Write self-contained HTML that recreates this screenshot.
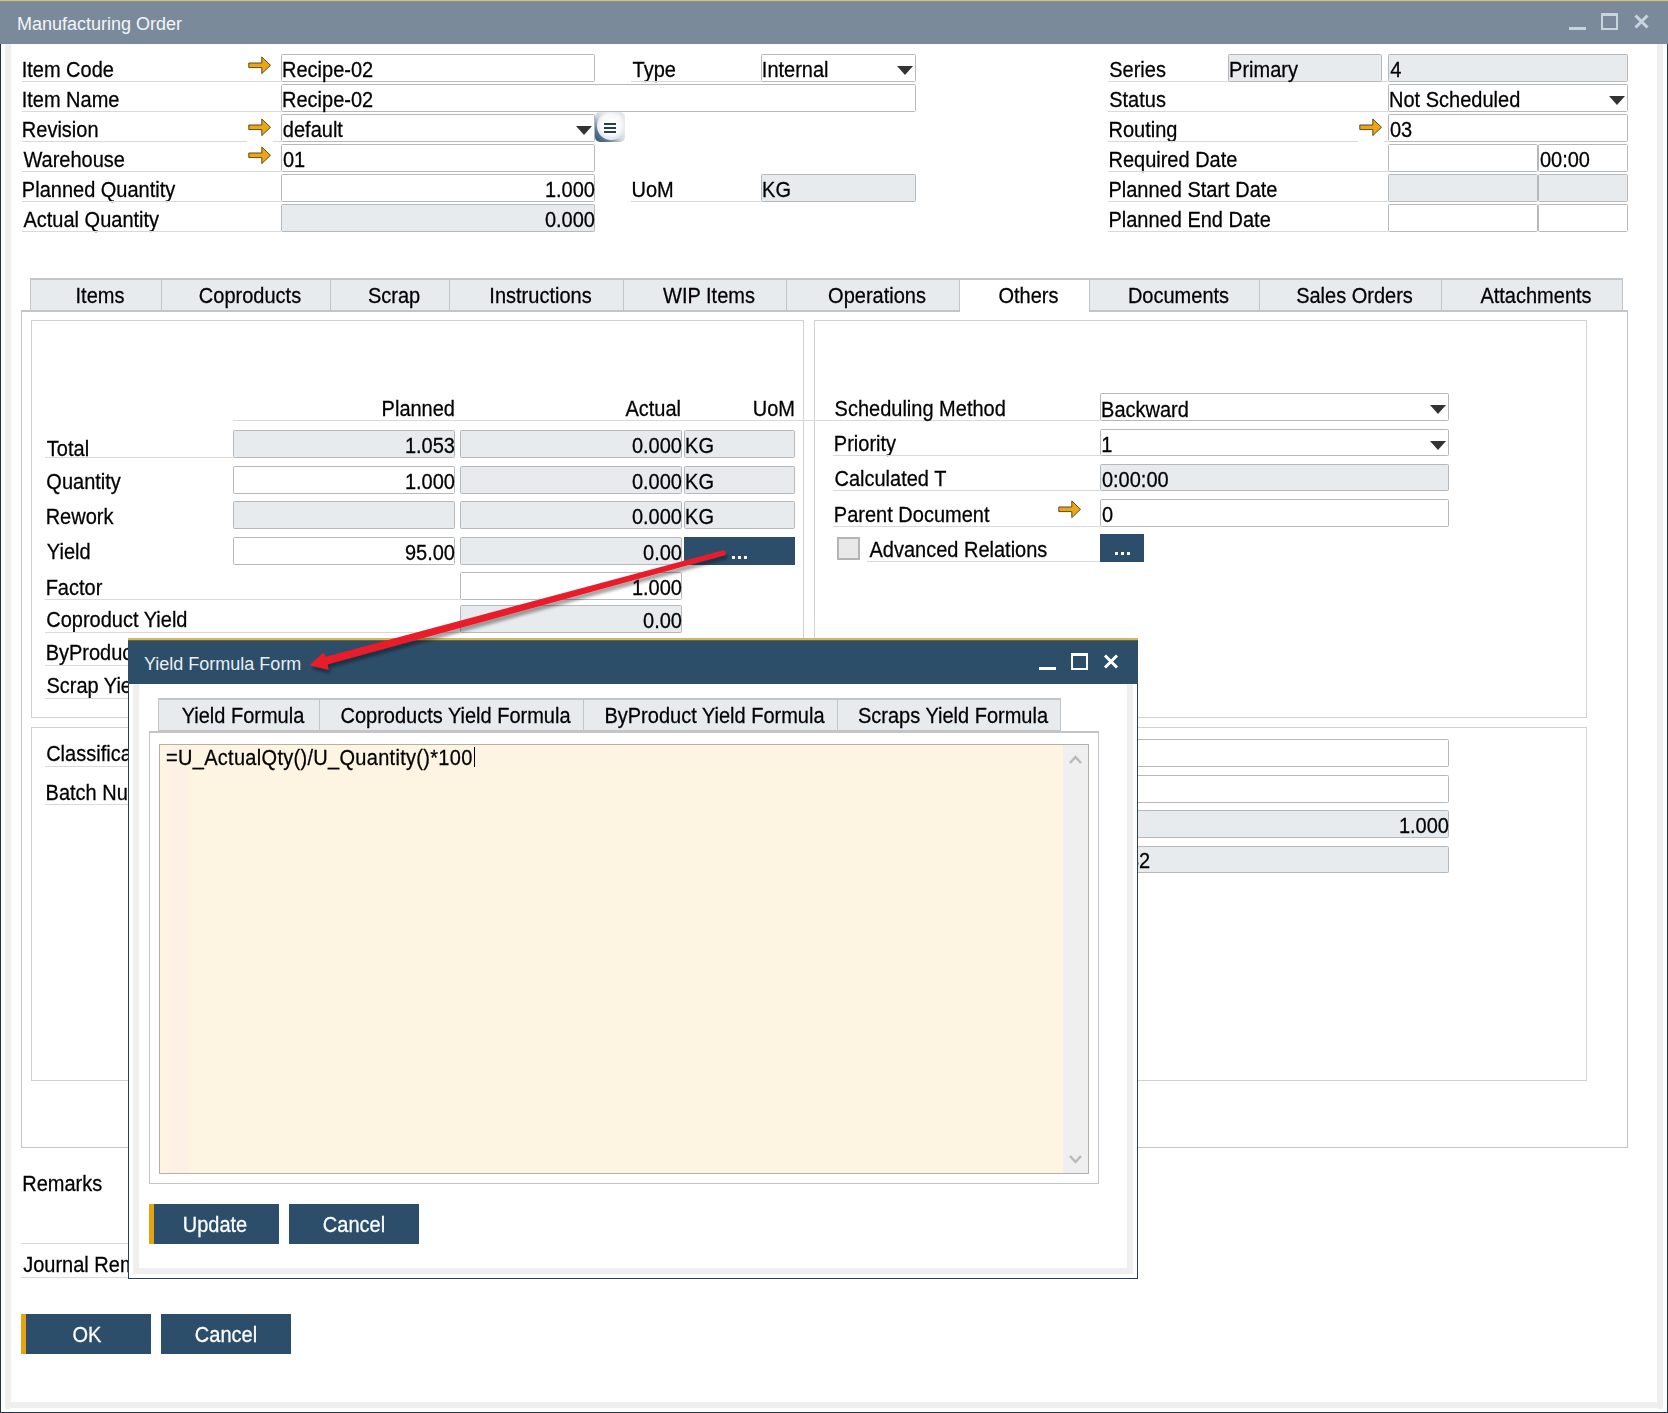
<!DOCTYPE html>
<html><head><meta charset="utf-8"><title>Manufacturing Order</title>
<style>
html,body{margin:0;padding:0;}
body{width:1668px;height:1413px;position:relative;overflow:hidden;background:#fff;font-family:'Liberation Sans',sans-serif;}
body>div{position:absolute;}
.t{white-space:pre;font-family:'Liberation Sans',sans-serif;-webkit-text-stroke:0.25px currentColor;transform:scaleY(1.08);transform-origin:0 17px;}
</style></head><body>
<div style="left:0px;top:0px;width:1668px;height:1px;background:#c9c199"></div>
<div style="left:0px;top:1px;width:1668px;height:1px;background:#929078"></div>
<div style="left:0px;top:2px;width:1668px;height:42px;background:#7b8a9a"></div>
<div class="t" style="left:17px;top:15px;font-size:18px;line-height:18px;color:#f2f5f8;-webkit-text-stroke:0;transform:none">Manufacturing Order</div>
<div style="left:1569px;top:27px;width:17px;height:3px;background:#c9d5de"></div>
<div style="left:1601px;top:13px;width:17px;height:17px;border:2px solid #c9d5de;border-top-width:3px;box-sizing:border-box"></div>
<svg style="position:absolute;left:1634px;top:14px" width="15" height="15" viewBox="0 0 15 15"><path d="M1.5 1.5 L13.5 13.5 M13.5 1.5 L1.5 13.5" stroke="#c9d5de" stroke-width="3"/></svg>
<div style="left:0px;top:44px;width:1px;height:1369px;background:#1f364c"></div>
<div style="left:1667px;top:44px;width:1px;height:1369px;background:#1f364c"></div>
<div style="left:0px;top:1412px;width:1668px;height:1px;background:#1f364c"></div>
<div style="left:5px;top:44px;width:6px;height:1365px;background:#efefef"></div>
<div style="left:1657px;top:44px;width:6px;height:1365px;background:#efefef"></div>
<div style="left:5px;top:1402px;width:1658px;height:6px;background:#efefef"></div>
<div class="t" style="left:21.65px;top:60px;font-size:20px;line-height:20px;color:#000;">Item Code</div>
<div style="left:22px;top:81px;width:259px;height:1px;background:#d9d9d9"></div>
<div class="t" style="left:21.65px;top:90px;font-size:20px;line-height:20px;color:#000;">Item Name</div>
<div style="left:22px;top:111px;width:259px;height:1px;background:#d9d9d9"></div>
<div class="t" style="left:21.86px;top:120px;font-size:20px;line-height:20px;color:#000;">Revision</div>
<div style="left:22px;top:141px;width:259px;height:1px;background:#d9d9d9"></div>
<div class="t" style="left:23.41px;top:150px;font-size:20px;line-height:20px;color:#000;">Warehouse</div>
<div style="left:22px;top:171px;width:259px;height:1px;background:#d9d9d9"></div>
<div class="t" style="left:21.86px;top:180px;font-size:20px;line-height:20px;color:#000;">Planned Quantity</div>
<div style="left:22px;top:201px;width:259px;height:1px;background:#d9d9d9"></div>
<div class="t" style="left:23.46px;top:210px;font-size:20px;line-height:20px;color:#000;">Actual Quantity</div>
<div style="left:22px;top:231px;width:259px;height:1px;background:#d9d9d9"></div>
<div style="left:281px;top:54px;width:314px;height:28px;border:1px solid #b6b9bc;border-radius:1.5px;box-sizing:border-box;background:#fff"></div>
<div class="t" style="left:282.06px;top:60px;font-size:20px;line-height:20px;color:#000;">Recipe-02</div>
<div style="left:281px;top:84px;width:635px;height:28px;border:1px solid #b6b9bc;border-radius:1.5px;box-sizing:border-box;background:#fff"></div>
<div class="t" style="left:282.06px;top:90px;font-size:20px;line-height:20px;color:#000;">Recipe-02</div>
<div style="left:281px;top:114px;width:314px;height:28px;border:1px solid #b6b9bc;border-radius:1.5px;box-sizing:border-box;background:#fff"></div>
<div class="t" style="left:282.86px;top:120px;font-size:20px;line-height:20px;color:#000;">default</div>
<div style="left:576px;top:126px;width:0;height:0;border-left:8.0px solid transparent;border-right:8.0px solid transparent;border-top:9px solid #333"></div>
<div style="left:281px;top:144px;width:314px;height:28px;border:1px solid #b6b9bc;border-radius:1.5px;box-sizing:border-box;background:#fff"></div>
<div class="t" style="left:282.92px;top:150px;font-size:20px;line-height:20px;color:#000;">01</div>
<div style="left:281px;top:174px;width:314px;height:28px;border:1px solid #b6b9bc;border-radius:1.5px;box-sizing:border-box;background:#fff"></div>
<div class="t" style="right:1073px;top:180px;font-size:20px;line-height:20px;color:#000;text-align:right;">1.000</div>
<div style="left:281px;top:204px;width:314px;height:28px;border:1px solid #b6b9bc;border-radius:1.5px;box-sizing:border-box;background:#e8ebee"></div>
<div class="t" style="right:1073px;top:210px;font-size:20px;line-height:20px;color:#000;text-align:right;">0.000</div>
<svg style="position:absolute;left:248px;top:56px" width="24" height="19" viewBox="0 0 24 19"><path d="M0.8 7 H13.8 V1 L22.5 9.3 L13.8 17.6 V11.6 H0.8 Z" fill="#eba614" stroke="#5a4a20" stroke-width="1" stroke-linejoin="miter"/></svg>
<svg style="position:absolute;left:248px;top:118px" width="24" height="19" viewBox="0 0 24 19"><path d="M0.8 7 H13.8 V1 L22.5 9.3 L13.8 17.6 V11.6 H0.8 Z" fill="#eba614" stroke="#5a4a20" stroke-width="1" stroke-linejoin="miter"/></svg>
<svg style="position:absolute;left:248px;top:146px" width="24" height="19" viewBox="0 0 24 19"><path d="M0.8 7 H13.8 V1 L22.5 9.3 L13.8 17.6 V11.6 H0.8 Z" fill="#eba614" stroke="#5a4a20" stroke-width="1" stroke-linejoin="miter"/></svg>
<div style="left:247px;top:141px;width:26px;height:1px;background:#fff"></div>
<div style="left:595px;top:112px;width:30px;height:30px;border-radius:5px;background:linear-gradient(45deg,#2f5273 0%,#5b7794 22%,#c9d3dd 45%,#eef1f4 70%,#dfe5ea 100%)"></div>
<div style="left:597px;top:112px;width:28px;height:28px;border-radius:50%;background:radial-gradient(circle at 50% 45%,#ffffff 0%,#f6f8fa 50%,#d9e0e7 80%,#b9c6d2 100%)"></div>
<div style="left:604px;top:123px;width:12px;height:2px;background:#2a3d52"></div>
<div style="left:604px;top:127px;width:12px;height:2px;background:#2a3d52"></div>
<div style="left:604px;top:131px;width:12px;height:2px;background:#2a3d52"></div>
<div class="t" style="left:632.55px;top:60px;font-size:20px;line-height:20px;color:#000;">Type</div>
<div style="left:631px;top:81px;width:130px;height:1px;background:#d9d9d9"></div>
<div style="left:761px;top:54px;width:155px;height:28px;border:1px solid #b6b9bc;border-radius:1.5px;box-sizing:border-box;background:#fff"></div>
<div class="t" style="left:761.85px;top:60px;font-size:20px;line-height:20px;color:#000;">Internal</div>
<div style="left:897px;top:66px;width:0;height:0;border-left:8.0px solid transparent;border-right:8.0px solid transparent;border-top:9px solid #333"></div>
<div class="t" style="left:631.46px;top:180px;font-size:20px;line-height:20px;color:#000;">UoM</div>
<div style="left:631px;top:201px;width:130px;height:1px;background:#d9d9d9"></div>
<div style="left:761px;top:174px;width:155px;height:28px;border:1px solid #b6b9bc;border-radius:1.5px;box-sizing:border-box;background:#e8ebee"></div>
<div class="t" style="left:762.06px;top:180px;font-size:20px;line-height:20px;color:#000;">KG</div>
<div class="t" style="left:1109.19px;top:60px;font-size:20px;line-height:20px;color:#000;">Series</div>
<div style="left:1108px;top:81px;width:280px;height:1px;background:#d9d9d9"></div>
<div class="t" style="left:1109.19px;top:90px;font-size:20px;line-height:20px;color:#000;">Status</div>
<div style="left:1108px;top:111px;width:280px;height:1px;background:#d9d9d9"></div>
<div class="t" style="left:1108.46px;top:120px;font-size:20px;line-height:20px;color:#000;">Routing</div>
<div style="left:1108px;top:141px;width:280px;height:1px;background:#d9d9d9"></div>
<div class="t" style="left:1108.46px;top:150px;font-size:20px;line-height:20px;color:#000;">Required Date</div>
<div style="left:1108px;top:171px;width:280px;height:1px;background:#d9d9d9"></div>
<div class="t" style="left:1108.46px;top:180px;font-size:20px;line-height:20px;color:#000;">Planned Start Date</div>
<div style="left:1108px;top:201px;width:280px;height:1px;background:#d9d9d9"></div>
<div class="t" style="left:1108.46px;top:210px;font-size:20px;line-height:20px;color:#000;">Planned End Date</div>
<div style="left:1108px;top:231px;width:280px;height:1px;background:#d9d9d9"></div>
<div style="left:1228px;top:54px;width:154px;height:28px;border:1px solid #b6b9bc;border-radius:1.5px;box-sizing:border-box;background:#e8ebee"></div>
<div class="t" style="left:1229.06px;top:60px;font-size:20px;line-height:20px;color:#000;">Primary</div>
<div style="left:1388px;top:54px;width:240px;height:28px;border:1px solid #b6b9bc;border-radius:1.5px;box-sizing:border-box;background:#e8ebee"></div>
<div class="t" style="left:1390.24px;top:60px;font-size:20px;line-height:20px;color:#000;">4</div>
<div style="left:1388px;top:84px;width:240px;height:28px;border:1px solid #b6b9bc;border-radius:1.5px;box-sizing:border-box;background:#fff"></div>
<div class="t" style="left:1389.06px;top:90px;font-size:20px;line-height:20px;color:#000;">Not Scheduled</div>
<div style="left:1609px;top:96px;width:0;height:0;border-left:8.0px solid transparent;border-right:8.0px solid transparent;border-top:9px solid #333"></div>
<div style="left:1388px;top:114px;width:240px;height:28px;border:1px solid #b6b9bc;border-radius:1.5px;box-sizing:border-box;background:#fff"></div>
<div class="t" style="left:1389.92px;top:120px;font-size:20px;line-height:20px;color:#000;">03</div>
<svg style="position:absolute;left:1359px;top:118px" width="24" height="19" viewBox="0 0 24 19"><path d="M0.8 7 H13.8 V1 L22.5 9.3 L13.8 17.6 V11.6 H0.8 Z" fill="#eba614" stroke="#5a4a20" stroke-width="1" stroke-linejoin="miter"/></svg>
<div style="left:1358px;top:141px;width:26px;height:1px;background:#fff"></div>
<div style="left:1388px;top:144px;width:150px;height:28px;border:1px solid #b6b9bc;border-radius:1.5px;box-sizing:border-box;background:#fff"></div>
<div style="left:1538px;top:144px;width:90px;height:28px;border:1px solid #b6b9bc;border-radius:1.5px;box-sizing:border-box;background:#fff"></div>
<div class="t" style="left:1539.92px;top:150px;font-size:20px;line-height:20px;color:#000;">00:00</div>
<div style="left:1388px;top:174px;width:150px;height:28px;border:1px solid #b6b9bc;border-radius:1.5px;box-sizing:border-box;background:#e8ebee"></div>
<div style="left:1538px;top:174px;width:90px;height:28px;border:1px solid #b6b9bc;border-radius:1.5px;box-sizing:border-box;background:#e8ebee"></div>
<div style="left:1388px;top:204px;width:150px;height:28px;border:1px solid #b6b9bc;border-radius:1.5px;box-sizing:border-box;background:#fff"></div>
<div style="left:1538px;top:204px;width:90px;height:28px;border:1px solid #b6b9bc;border-radius:1.5px;box-sizing:border-box;background:#fff"></div>
<div style="left:21px;top:310px;width:1607px;height:838px;border:1px solid #c2c4c6;border-top:2px solid #c2c4c6;box-sizing:border-box;background:#fff"></div>
<div style="left:30px;top:278px;width:132px;height:32px;background:#e8ebee;border:1px solid #c2c4c6;border-top:2px solid #c2c4c6;border-bottom:0;box-sizing:border-box"></div>
<div class="t" style="left:-200.0px;width:600px;top:286px;font-size:20px;line-height:20px;color:#000;text-align:center;">Items</div>
<div style="left:161px;top:278px;width:170px;height:32px;background:#e8ebee;border:1px solid #c2c4c6;border-top:2px solid #c2c4c6;border-bottom:0;box-sizing:border-box"></div>
<div class="t" style="left:-50.0px;width:600px;top:286px;font-size:20px;line-height:20px;color:#000;text-align:center;">Coproducts</div>
<div style="left:330px;top:278px;width:120px;height:32px;background:#e8ebee;border:1px solid #c2c4c6;border-top:2px solid #c2c4c6;border-bottom:0;box-sizing:border-box"></div>
<div class="t" style="left:94.0px;width:600px;top:286px;font-size:20px;line-height:20px;color:#000;text-align:center;">Scrap</div>
<div style="left:449px;top:278px;width:175px;height:32px;background:#e8ebee;border:1px solid #c2c4c6;border-top:2px solid #c2c4c6;border-bottom:0;box-sizing:border-box"></div>
<div class="t" style="left:240.5px;width:600px;top:286px;font-size:20px;line-height:20px;color:#000;text-align:center;">Instructions</div>
<div style="left:623px;top:278px;width:164px;height:32px;background:#e8ebee;border:1px solid #c2c4c6;border-top:2px solid #c2c4c6;border-bottom:0;box-sizing:border-box"></div>
<div class="t" style="left:409.0px;width:600px;top:286px;font-size:20px;line-height:20px;color:#000;text-align:center;">WIP Items</div>
<div style="left:786px;top:278px;width:174px;height:32px;background:#e8ebee;border:1px solid #c2c4c6;border-top:2px solid #c2c4c6;border-bottom:0;box-sizing:border-box"></div>
<div class="t" style="left:577.0px;width:600px;top:286px;font-size:20px;line-height:20px;color:#000;text-align:center;">Operations</div>
<div style="left:959px;top:278px;width:131px;height:34px;background:#fff;border:1px solid #c2c4c6;border-top:2px solid #c2c4c6;border-bottom:none;box-sizing:border-box"></div>
<div class="t" style="left:728.5px;width:600px;top:286px;font-size:20px;line-height:20px;color:#000;text-align:center;">Others</div>
<div style="left:1089px;top:278px;width:171px;height:32px;background:#e8ebee;border:1px solid #c2c4c6;border-top:2px solid #c2c4c6;border-bottom:0;box-sizing:border-box"></div>
<div class="t" style="left:878.5px;width:600px;top:286px;font-size:20px;line-height:20px;color:#000;text-align:center;">Documents</div>
<div style="left:1259px;top:278px;width:183px;height:32px;background:#e8ebee;border:1px solid #c2c4c6;border-top:2px solid #c2c4c6;border-bottom:0;box-sizing:border-box"></div>
<div class="t" style="left:1054.5px;width:600px;top:286px;font-size:20px;line-height:20px;color:#000;text-align:center;">Sales Orders</div>
<div style="left:1441px;top:278px;width:182px;height:32px;background:#e8ebee;border:1px solid #c2c4c6;border-top:2px solid #c2c4c6;border-bottom:0;box-sizing:border-box"></div>
<div class="t" style="left:1236.0px;width:600px;top:286px;font-size:20px;line-height:20px;color:#000;text-align:center;">Attachments</div>
<div style="left:31px;top:320px;width:773px;height:398px;border:1px solid #d2d2d2;box-sizing:border-box;background:transparent"></div>
<div style="left:814px;top:320px;width:773px;height:398px;border:1px solid #d2d2d2;box-sizing:border-box;background:transparent"></div>
<div style="left:31px;top:727px;width:773px;height:354px;border:1px solid #d2d2d2;box-sizing:border-box;background:transparent"></div>
<div style="left:814px;top:727px;width:773px;height:354px;border:1px solid #d2d2d2;box-sizing:border-box;background:transparent"></div>
<div class="t" style="right:1213px;top:399px;font-size:20px;line-height:20px;color:#000;text-align:right;">Planned</div>
<div class="t" style="right:987px;top:399px;font-size:20px;line-height:20px;color:#000;text-align:right;">Actual</div>
<div class="t" style="right:873px;top:399px;font-size:20px;line-height:20px;color:#000;text-align:right;">UoM</div>
<div style="left:233px;top:420px;width:867px;height:1px;background:#d9d9d9"></div>
<div class="t" style="left:46.85px;top:439px;font-size:20px;line-height:20px;color:#000;">Total</div>
<div class="t" style="left:46.35px;top:472px;font-size:20px;line-height:20px;color:#000;">Quantity</div>
<div class="t" style="left:45.66px;top:507px;font-size:20px;line-height:20px;color:#000;">Rework</div>
<div class="t" style="left:46.86px;top:542px;font-size:20px;line-height:20px;color:#000;">Yield</div>
<div class="t" style="left:45.66px;top:578px;font-size:20px;line-height:20px;color:#000;">Factor</div>
<div class="t" style="left:46.28px;top:610px;font-size:20px;line-height:20px;color:#000;">Coproduct Yield</div>
<div class="t" style="left:45.66px;top:643px;font-size:20px;line-height:20px;color:#000;">ByProduct Yield</div>
<div class="t" style="left:46.39px;top:676px;font-size:20px;line-height:20px;color:#000;">Scrap Yield</div>
<div style="left:45px;top:457px;width:188px;height:1px;background:#d9d9d9"></div>
<div style="left:45px;top:599px;width:415px;height:1px;background:#d9d9d9"></div>
<div style="left:45px;top:632px;width:415px;height:1px;background:#d9d9d9"></div>
<div style="left:45px;top:665px;width:415px;height:1px;background:#d9d9d9"></div>
<div style="left:45px;top:698px;width:415px;height:1px;background:#d9d9d9"></div>
<div style="left:233px;top:430px;width:222px;height:28px;border:1px solid #b6b9bc;border-radius:1.5px;box-sizing:border-box;background:#e8ebee"></div>
<div class="t" style="right:1213px;top:436px;font-size:20px;line-height:20px;color:#000;text-align:right;">1.053</div>
<div style="left:460px;top:430px;width:222px;height:28px;border:1px solid #b6b9bc;border-radius:1.5px;box-sizing:border-box;background:#e8ebee"></div>
<div class="t" style="right:986px;top:436px;font-size:20px;line-height:20px;color:#000;text-align:right;">0.000</div>
<div style="left:684px;top:430px;width:111px;height:28px;border:1px solid #b6b9bc;border-radius:1.5px;box-sizing:border-box;background:#e8ebee"></div>
<div class="t" style="left:685.06px;top:436px;font-size:20px;line-height:20px;color:#000;">KG</div>
<div style="left:233px;top:466px;width:222px;height:28px;border:1px solid #b6b9bc;border-radius:1.5px;box-sizing:border-box;background:#fff"></div>
<div class="t" style="right:1213px;top:472px;font-size:20px;line-height:20px;color:#000;text-align:right;">1.000</div>
<div style="left:460px;top:466px;width:222px;height:28px;border:1px solid #b6b9bc;border-radius:1.5px;box-sizing:border-box;background:#e8ebee"></div>
<div class="t" style="right:986px;top:472px;font-size:20px;line-height:20px;color:#000;text-align:right;">0.000</div>
<div style="left:684px;top:466px;width:111px;height:28px;border:1px solid #b6b9bc;border-radius:1.5px;box-sizing:border-box;background:#e8ebee"></div>
<div class="t" style="left:685.06px;top:472px;font-size:20px;line-height:20px;color:#000;">KG</div>
<div style="left:233px;top:501px;width:222px;height:28px;border:1px solid #b6b9bc;border-radius:1.5px;box-sizing:border-box;background:#e8ebee"></div>
<div style="left:460px;top:501px;width:222px;height:28px;border:1px solid #b6b9bc;border-radius:1.5px;box-sizing:border-box;background:#e8ebee"></div>
<div class="t" style="right:986px;top:507px;font-size:20px;line-height:20px;color:#000;text-align:right;">0.000</div>
<div style="left:684px;top:501px;width:111px;height:28px;border:1px solid #b6b9bc;border-radius:1.5px;box-sizing:border-box;background:#e8ebee"></div>
<div class="t" style="left:685.06px;top:507px;font-size:20px;line-height:20px;color:#000;">KG</div>
<div style="left:233px;top:537px;width:222px;height:28px;border:1px solid #b6b9bc;border-radius:1.5px;box-sizing:border-box;background:#fff"></div>
<div class="t" style="right:1213px;top:543px;font-size:20px;line-height:20px;color:#000;text-align:right;">95.00</div>
<div style="left:460px;top:537px;width:222px;height:28px;border:1px solid #b6b9bc;border-radius:1.5px;box-sizing:border-box;background:#e8ebee"></div>
<div class="t" style="right:986px;top:543px;font-size:20px;line-height:20px;color:#000;text-align:right;">0.00</div>
<div style="left:684px;top:537px;width:111px;height:28px;background:#2d4e6a"></div>
<div style="left:732px;top:556px;width:3px;height:3px;background:#fff"></div>
<div style="left:738px;top:556px;width:3px;height:3px;background:#fff"></div>
<div style="left:744px;top:556px;width:3px;height:3px;background:#fff"></div>
<div style="left:460px;top:572px;width:222px;height:28px;border:1px solid #b6b9bc;border-radius:1.5px;box-sizing:border-box;background:#fff"></div>
<div class="t" style="right:986px;top:578px;font-size:20px;line-height:20px;color:#000;text-align:right;">1.000</div>
<div style="left:460px;top:605px;width:222px;height:28px;border:1px solid #b6b9bc;border-radius:1.5px;box-sizing:border-box;background:#e8ebee"></div>
<div class="t" style="right:986px;top:611px;font-size:20px;line-height:20px;color:#000;text-align:right;">0.00</div>
<div class="t" style="left:834.59px;top:399px;font-size:20px;line-height:20px;color:#000;">Scheduling Method</div>
<div class="t" style="left:833.86px;top:434px;font-size:20px;line-height:20px;color:#000;">Priority</div>
<div class="t" style="left:834.48px;top:469px;font-size:20px;line-height:20px;color:#000;">Calculated T</div>
<div class="t" style="left:833.86px;top:505px;font-size:20px;line-height:20px;color:#000;">Parent Document</div>
<div style="left:833px;top:455px;width:267px;height:1px;background:#d9d9d9"></div>
<div style="left:833px;top:490px;width:267px;height:1px;background:#d9d9d9"></div>
<div style="left:833px;top:526px;width:267px;height:1px;background:#d9d9d9"></div>
<div style="left:867px;top:561px;width:233px;height:1px;background:#d9d9d9"></div>
<div style="left:1100px;top:393px;width:349px;height:28px;border:1px solid #b6b9bc;border-radius:1.5px;box-sizing:border-box;background:#fff"></div>
<div class="t" style="left:1101.06px;top:400px;font-size:20px;line-height:20px;color:#000;">Backward</div>
<div style="left:1430px;top:405px;width:0;height:0;border-left:8.0px solid transparent;border-right:8.0px solid transparent;border-top:9px solid #333"></div>
<div style="left:1100px;top:429px;width:349px;height:27px;border:1px solid #b6b9bc;border-radius:1.5px;box-sizing:border-box;background:#fff"></div>
<div class="t" style="left:1101.18px;top:435px;font-size:20px;line-height:20px;color:#000;">1</div>
<div style="left:1430px;top:441px;width:0;height:0;border-left:8.0px solid transparent;border-right:8.0px solid transparent;border-top:9px solid #333"></div>
<div style="left:1100px;top:464px;width:349px;height:27px;border:1px solid #b6b9bc;border-radius:1.5px;box-sizing:border-box;background:#e8ebee"></div>
<div class="t" style="left:1101.92px;top:470px;font-size:20px;line-height:20px;color:#000;">0:00:00</div>
<div style="left:1100px;top:499px;width:349px;height:28px;border:1px solid #b6b9bc;border-radius:1.5px;box-sizing:border-box;background:#fff"></div>
<div class="t" style="left:1101.92px;top:505px;font-size:20px;line-height:20px;color:#000;">0</div>
<svg style="position:absolute;left:1058px;top:500px" width="24" height="19" viewBox="0 0 24 19"><path d="M0.8 7 H13.8 V1 L22.5 9.3 L13.8 17.6 V11.6 H0.8 Z" fill="#eba614" stroke="#5a4a20" stroke-width="1" stroke-linejoin="miter"/></svg>
<div style="left:837px;top:537px;width:23px;height:23px;border:2px solid #b4b4b4;background:#e9e9e9;box-sizing:border-box"></div>
<div class="t" style="left:869.46px;top:540px;font-size:20px;line-height:20px;color:#000;">Advanced Relations</div>
<div style="left:1100px;top:534px;width:44px;height:28px;background:#2d4e6a"></div>
<div style="left:1115px;top:552px;width:3px;height:3px;background:#fff"></div>
<div style="left:1121px;top:552px;width:3px;height:3px;background:#fff"></div>
<div style="left:1127px;top:552px;width:3px;height:3px;background:#fff"></div>
<div class="t" style="left:46.18px;top:744px;font-size:20px;line-height:20px;color:#000;">Classification</div>
<div style="left:45px;top:766px;width:355px;height:1px;background:#d9d9d9"></div>
<div class="t" style="left:45.56px;top:783px;font-size:20px;line-height:20px;color:#000;">Batch Number</div>
<div style="left:45px;top:804px;width:355px;height:1px;background:#d9d9d9"></div>
<div style="left:1100px;top:739px;width:349px;height:28px;border:1px solid #b6b9bc;border-radius:1.5px;box-sizing:border-box;background:#fff"></div>
<div style="left:1100px;top:775px;width:349px;height:28px;border:1px solid #b6b9bc;border-radius:1.5px;box-sizing:border-box;background:#fff"></div>
<div style="left:1100px;top:810px;width:349px;height:28px;border:1px solid #b6b9bc;border-radius:1.5px;box-sizing:border-box;background:#e8ebee"></div>
<div class="t" style="right:219px;top:816px;font-size:20px;line-height:20px;color:#000;text-align:right;">1.000</div>
<div style="left:1100px;top:846px;width:349px;height:27px;border:1px solid #b6b9bc;border-radius:1.5px;box-sizing:border-box;background:#e8ebee"></div>
<div class="t" style="left:1128px;top:851px;font-size:20px;line-height:20px;color:#000;">32</div>
<div class="t" style="left:22.26px;top:1174px;font-size:20px;line-height:20px;color:#000;">Remarks</div>
<div style="left:21px;top:1243px;width:879px;height:1px;background:#d9d9d9"></div>
<div class="t" style="left:23.19px;top:1255px;font-size:20px;line-height:20px;color:#000;">Journal Remark</div>
<div style="left:21px;top:1277px;width:879px;height:1px;background:#d9d9d9"></div>
<div style="left:21px;top:1314px;width:130px;height:40px;background:#2d4e6a"></div>
<div style="left:21px;top:1314px;width:5px;height:40px;background:#e6a20f"></div>
<div class="t" style="left:-213.0px;width:600px;top:1325px;font-size:20px;line-height:20px;color:#fff;text-align:center;">OK</div>
<div style="left:161px;top:1314px;width:130px;height:40px;background:#2d4e6a"></div>
<div class="t" style="left:-74.0px;width:600px;top:1325px;font-size:20px;line-height:20px;color:#fff;text-align:center;">Cancel</div>
<div style="left:128px;top:639px;width:1010px;height:640px;background:#fff;border:1px solid #2a3f56;border-top:none;box-sizing:border-box"></div>
<div style="left:128px;top:638px;width:1010px;height:2px;background:#d2b85e"></div>
<div style="left:128px;top:640px;width:1010px;height:1px;background:#6d6338"></div>
<div style="left:128px;top:641px;width:1010px;height:43px;background:#2d4e69"></div>
<div class="t" style="left:144px;top:655px;font-size:18px;line-height:18px;color:#e9eff4;-webkit-text-stroke:0;transform:none">Yield Formula Form</div>
<div style="left:1039px;top:667px;width:17px;height:3px;background:#ffffff"></div>
<div style="left:1071px;top:653px;width:17px;height:17px;border:2px solid #ffffff;border-top-width:3px;box-sizing:border-box"></div>
<svg style="position:absolute;left:1103px;top:654px" width="16" height="15" viewBox="0 0 16 15"><path d="M2 1.5 L14 13.5 M14 1.5 L2 13.5" stroke="#ffffff" stroke-width="3"/></svg>
<div style="left:133px;top:684px;width:6px;height:590px;background:#efefef"></div>
<div style="left:1127px;top:684px;width:6px;height:590px;background:#efefef"></div>
<div style="left:133px;top:1268px;width:1000px;height:6px;background:#efefef"></div>
<div style="left:149px;top:731px;width:950px;height:453px;border:1px solid #c2c4c6;border-top:2px solid #c2c4c6;box-sizing:border-box;background:#fff"></div>
<div style="left:158px;top:698px;width:162px;height:34px;background:#e8ebee;border:1px solid #c2c4c6;border-top:2px solid #c2c4c6;border-bottom:2px solid #c2c4c6;box-sizing:border-box"></div>
<div class="t" style="left:-57.0px;width:600px;top:706px;font-size:20px;line-height:20px;color:#000;text-align:center;">Yield Formula</div>
<div style="left:319px;top:698px;width:265px;height:34px;background:#e8ebee;border:1px solid #c2c4c6;border-top:2px solid #c2c4c6;border-bottom:2px solid #c2c4c6;box-sizing:border-box"></div>
<div class="t" style="left:155.5px;width:600px;top:706px;font-size:20px;line-height:20px;color:#000;text-align:center;">Coproducts Yield Formula</div>
<div style="left:583px;top:698px;width:255px;height:34px;background:#e8ebee;border:1px solid #c2c4c6;border-top:2px solid #c2c4c6;border-bottom:2px solid #c2c4c6;box-sizing:border-box"></div>
<div class="t" style="left:414.5px;width:600px;top:706px;font-size:20px;line-height:20px;color:#000;text-align:center;">ByProduct Yield Formula</div>
<div style="left:837px;top:698px;width:224px;height:34px;background:#e8ebee;border:1px solid #c2c4c6;border-top:2px solid #c2c4c6;border-bottom:2px solid #c2c4c6;box-sizing:border-box"></div>
<div class="t" style="left:653.0px;width:600px;top:706px;font-size:20px;line-height:20px;color:#000;text-align:center;">Scraps Yield Formula</div>
<div style="left:159px;top:744px;width:930px;height:430px;border:1px solid #b4b0a8;box-sizing:border-box;background:#fdf5e1"></div>
<div style="left:166px;top:745px;width:26px;height:428px;background:linear-gradient(90deg,#fdf4e2,#fdf0e5 25%,#fdf0e5 75%,#fdf5e1)"></div>
<div style="left:1063px;top:745px;width:25px;height:428px;background:#efefef"></div>
<svg style="position:absolute;left:1069px;top:754px" width="13" height="10" viewBox="0 0 13 10"><path d="M1 9 L6.5 3 L12 9" stroke="#b9b9b9" stroke-width="2.5" fill="none"/></svg>
<svg style="position:absolute;left:1069px;top:1155px" width="13" height="10" viewBox="0 0 13 10"><path d="M1 1 L6.5 7 L12 1" stroke="#b9b9b9" stroke-width="2.5" fill="none"/></svg>
<div class="t" style="left:166px;top:748px;font-size:20px;line-height:20px;color:#000;letter-spacing:0.3px">=U_ActualQty()/U_Quantity()*100</div>
<div style="left:474px;top:747px;width:1px;height:20px;background:#000"></div>
<div style="left:149px;top:1204px;width:130px;height:40px;background:#2d4e6a"></div>
<div style="left:149px;top:1204px;width:5px;height:40px;background:#e6a20f"></div>
<div class="t" style="left:-85.0px;width:600px;top:1215px;font-size:20px;line-height:20px;color:#fff;text-align:center;">Update</div>
<div style="left:289px;top:1204px;width:130px;height:40px;background:#2d4e6a"></div>
<div class="t" style="left:54.0px;width:600px;top:1215px;font-size:20px;line-height:20px;color:#fff;text-align:center;">Cancel</div>
<svg style="position:absolute;left:0;top:0;overflow:visible" width="1668" height="1413"><defs><filter id="sh" x="-20%" y="-50%" width="140%" height="200%"><feGaussianBlur in="SourceAlpha" stdDeviation="1.8"/><feOffset dx="2" dy="4"/><feComponentTransfer><feFuncA type="linear" slope="0.35"/></feComponentTransfer><feMerge><feMergeNode/><feMergeNode in="SourceGraphic"/></feMerge></filter></defs><g filter="url(#sh)"><path d="M309.4 665.3 L323.5 652.4 L325.7 656.8 L722.3 550.4 L723.7 555.6 L327.8 664.3 L328.4 669.7 Z" fill="#ea1b2b"/><circle cx="723.0" cy="553.0" r="2.7" fill="#ea1b2b"/></g></svg>
</body></html>
